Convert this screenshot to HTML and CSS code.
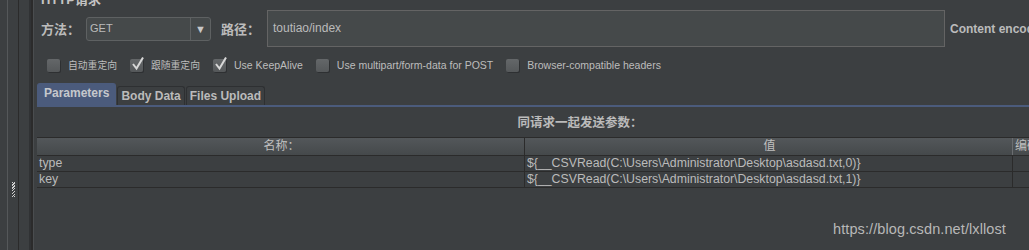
FILE: index.html
```html
<!DOCTYPE html>
<html lang="zh-CN">
<head>
  <meta charset="UTF-8">
  <title>HTTP请求</title>
  <link rel="stylesheet" href="styles.css">
</head>
<body>

<div class="gutter">
  <div class="strip strip-a"></div>
  <div class="strip strip-b"><span class="grip"></span></div>
  <div class="strip strip-c"></div>
</div>

<div class="main">
  <div class="section-title">HTTP请求</div>

  <div class="request-row">
    <span class="label">方法：</span>
    <div class="select">
      <span class="select-value">GET</span>
      <span class="select-arrow">&#9660;</span>
    </div>
    <span class="label label-path">路径：</span>
    <div class="path-input">toutiao/index</div>
    <span class="label-bold">Content encoding:</span>
  </div>

  <div class="options">
    <label class="opt cjk"><span class="box"></span>自动重定向</label>
    <label class="opt cjk"><span class="box checked"><svg viewBox="0 0 14 14"><path d="M2 7 L5.5 11.5 L12 0.5" /></svg></span>跟随重定向</label>
    <label class="opt"><span class="box checked"><svg viewBox="0 0 14 14"><path d="M2 7 L5.5 11.5 L12 0.5" /></svg></span>Use KeepAlive</label>
    <label class="opt"><span class="box"></span>Use multipart/form-data for POST</label>
    <label class="opt"><span class="box"></span>Browser-compatible headers</label>
  </div>

  <div class="tabs">
    <div class="tab active">Parameters</div>
    <div class="tab">Body Data</div>
    <div class="tab">Files Upload</div>
  </div>

  <div class="tab-panel">
    <div class="panel-caption">同请求一起发送参数：</div>
    <div class="table">
      <div class="row head">
        <div class="cell c-name">名称：</div>
        <div class="cell c-value">值</div>
        <div class="cell c-enc">编码？</div>
      </div>
      <div class="row">
        <div class="cell c-name">type</div>
        <div class="cell c-value">${__CSVRead(C:\Users\Administrator\Desktop\asdasd.txt,0)}</div>
        <div class="cell c-enc"></div>
      </div>
      <div class="row">
        <div class="cell c-name">key</div>
        <div class="cell c-value">${__CSVRead(C:\Users\Administrator\Desktop\asdasd.txt,1)}</div>
        <div class="cell c-enc"></div>
      </div>
    </div>
  </div>
</div>

<div class="watermark">https://blog.csdn.net/lxllost</div>

</body>
</html>
```

FILE: styles.css
```css
:root {
  --bg: #3c3f41;
  --text: #bbbbbb;
  --field: #45494a;
  --field-border: #646464;
  --dark-line: #2b2b2b;
  --accent: #4b5b7c;
}

body {
  margin: 0;
  width: 1029px;
  height: 250px;
  overflow: hidden;
  background: var(--bg);
  color: var(--text);
  font-family: "Liberation Sans", "Noto Sans CJK SC", sans-serif;
  display: flex;
  position: relative;
}

/* left splitter strips */
.gutter {
  display: flex;
  height: 250px;
  flex-shrink: 0;
}

.strip-a {
  width: 7px;
  border-right: 1px solid #55585a;
}

.strip-b {
  width: 10px;
  border-right: 1px solid var(--dark-line);
  position: relative;
}

.grip {
  position: absolute;
  left: 4px;
  top: 182px;
  width: 3px;
  height: 15px;
  background: repeating-linear-gradient(135deg, #d0d0d0 0 1px, transparent 1px 2px);
}

.strip-c {
  width: 10px;
  border-right: 2px solid #303234;
}

.main {
  flex: 1;
  min-width: 0;
  border-left: 1px solid #4a4d4f;
  box-shadow: -2px 0 0 var(--dark-line);
  margin-left: 2px;
  padding-left: 3px;
}

.section-title {
  font-size: 13px;
  font-weight: bold;
  height: 10px;
  line-height: 0;
  margin-left: 4px;
  color: #c4c4c4;
}

.request-row {
  display: flex;
  align-items: center;
  height: 37px;
  white-space: nowrap;
}

.request-row > * {
  flex-shrink: 0;
}

.label {
  font-size: 13px;
  font-weight: bold;
  margin-left: 4px;
  width: 45px;
}

.label-path {
  margin-left: 10px;
  width: 46px;
}

.select {
  display: flex;
  width: 123px;
  height: 22px;
  border: 1px solid #5e6162;
  border-radius: 3px;
  background: var(--field);
  font-size: 11px;
}

.select-value {
  flex: 1;
  padding: 4px 3px;
}

.select-arrow {
  width: 19px;
  border-left: 1px solid #5e6162;
  font-size: 11px;
  text-align: center;
  line-height: 22px;
  color: #c8c8c8;
}

.path-input {
  width: 671px;
  height: 35px;
  border: 1px solid var(--field-border);
  background: var(--field);
  font-size: 12px;
  line-height: 35px;
  padding-left: 5px;
}

.label-bold {
  font-size: 12px;
  font-weight: bold;
  margin-left: 5px;
}

.options {
  display: flex;
  align-items: center;
  height: 36px;
  padding-left: 10px;
  font-size: 10.5px;
}

.opt {
  display: flex;
  align-items: center;
  margin-right: 13px;
  color: #bdbdbd;
}

.opt.cjk {
  font-size: 9.8px;
}

.box {
  width: 13px;
  height: 13px;
  margin-right: 8px;
  border-radius: 2px;
  background: linear-gradient(#646769, #55585a);
  box-shadow: 1px 1px 0 #2e3032;
  position: relative;
}

.box svg {
  position: absolute;
  left: 1px;
  top: -2px;
  width: 14px;
  height: 14px;
  fill: none;
  stroke: #d8d8d8;
  stroke-width: 2;
}

.tabs {
  display: flex;
  align-items: flex-end;
  height: 22px;
  border-bottom: 2px solid var(--accent);
}

.tab {
  font-size: 12px;
  font-weight: bold;
  height: 18px;
  line-height: 18px;
  padding: 0 3px;
  border: 1px solid #2e3032;
  border-bottom: none;
  border-radius: 3px 3px 0 0;
  margin-right: 1px;
}

.tab.active {
  height: 21px;
  line-height: 18px;
  background: var(--accent);
  border-color: #4b5b7c;
  color: #c6c8cc;
  padding: 0 6px;
}

.tab-panel {
  width: 1086px;
}

.panel-caption {
  font-size: 12.5px;
  font-weight: bold;
  text-align: center;
  height: 30px;
  line-height: 32px;
}

.table {
  border-top: 1px solid var(--dark-line);
}

.row {
  display: flex;
  height: 15px;
  border-bottom: 1px solid var(--dark-line);
  font-size: 12.3px;
  line-height: 15px;
}

.row.head {
  height: 17px;
  line-height: 17px;
  font-size: 12px;
  background: linear-gradient(#53575a, #45494b);
  color: #c0c0c0;
}

.cell {
  overflow: hidden;
  white-space: nowrap;
  padding-left: 2px;
}

.c-name {
  width: 485px;
  border-right: 1px solid var(--dark-line);
}

.c-value {
  width: 485px;
  border-right: 1px solid var(--dark-line);
}

.head .c-value {
  border-right-color: #6a6d70;
}

.c-enc {
  flex: 1;
}

.head .c-name,
.head .c-value {
  text-align: center;
}

.watermark {
  position: absolute;
  left: 833px;
  top: 221px;
  font-size: 14.5px;
  color: #b8b8b8;
  letter-spacing: 0.1px;
}
```
